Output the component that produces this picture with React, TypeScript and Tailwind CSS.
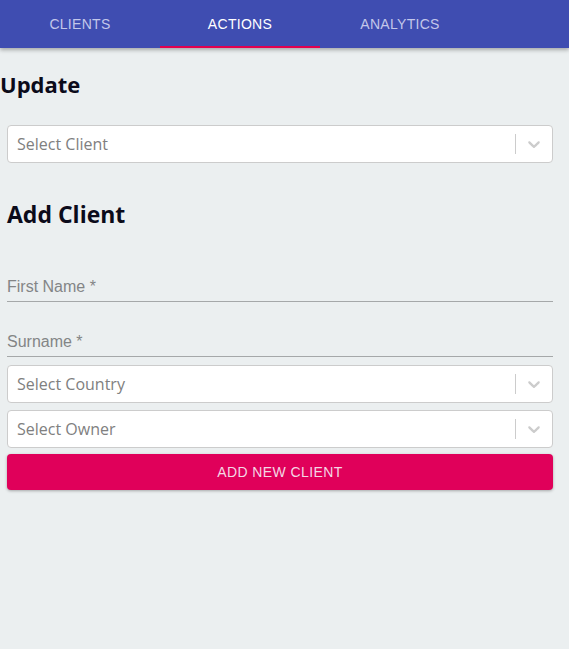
const tabs = ["Clients", "Actions", "Analytics"];

function Chevron() {
  return (
    <svg viewBox="0 0 20 20" width="20" height="20" fill="#cccccc">
      <path d="M4.516 7.548c0.436-0.446 1.043-0.481 1.576 0l3.908 3.747 3.908-3.747c0.533-0.481 1.141-0.446 1.574 0 0.436 0.445 0.408 1.197 0 1.615-0.406 0.418-4.695 4.502-4.695 4.502-0.217 0.223-0.502 0.335-0.787 0.335s-0.57-0.112-0.789-0.335c0 0-4.287-4.084-4.695-4.502s-0.436-1.17 0-1.615z" />
    </svg>
  );
}

function Select({ placeholder }: { placeholder: string }) {
  return (
    <div className="flex h-[38px] items-center rounded-[4px] border border-[#cccccc] bg-white">
      <div className="flex-1 px-[9px] font-['Open_Sans',sans-serif] text-[16px] text-[#808080]">
        {placeholder}
      </div>
      <span className="h-[20px] w-px bg-[#cccccc]" />
      <div className="p-[8px]">
        <Chevron />
      </div>
    </div>
  );
}

function TextField({ label }: { label: string }) {
  return (
    <div className="flex h-[55px] flex-col justify-end">
      <div className="border-b border-[#a5a8a9] pb-[5px] font-['Liberation_Sans',Arial,sans-serif] text-[16px] leading-[19px] text-[#838586]">
        {label} *
      </div>
    </div>
  );
}

export default function App() {
  return (
    <div className="min-h-[649px] bg-[#ebeff0] font-['Open_Sans',sans-serif]">
      <nav className="flex h-[48px] bg-[#3f4db1] shadow-[0_2px_4px_rgba(0,0,0,0.3)]">
        {tabs.map((t, i) => (
          <div
            key={t}
            className={
              i === 1
                ? "flex w-[160px] items-center justify-center border-b-2 border-[#e4004f] pt-[2px] font-['Liberation_Sans',Arial,sans-serif] text-[14px] tracking-[0.3px] uppercase text-white"
                : "flex w-[160px] items-center justify-center font-['Liberation_Sans',Arial,sans-serif] text-[14px] tracking-[0.3px] uppercase text-[#c3c7ea]"
            }
          >
            {t}
          </div>
        ))}
      </nav>

      <h3 className="mt-[21px] text-[22px] font-bold leading-[30px] text-[#0b0b1a]">
        Update
      </h3>

      <div className="pl-[7px] pr-[16px]">
        <div className="mt-[26px]">
          <Select placeholder="Select Client" />
        </div>

        <h2 className="mt-[35px] text-[23px] font-bold leading-[32px] text-[#0b0b1a]">
          Add Client
        </h2>

        <div className="mt-[17px]">
          <TextField label="First Name" />
          <TextField label="Surname" />
        </div>

        <div className="mt-[8px] flex flex-col gap-[7px]">
          <Select placeholder="Select Country" />
          <Select placeholder="Select Owner" />
          <button className="-mt-[1px] h-[36px] rounded-[4px] bg-[#e0005a] font-['Liberation_Sans',Arial,sans-serif] text-[14px] tracking-[0.4px] uppercase text-[#f4d7e4] shadow-[0_1px_3px_rgba(0,0,0,0.3)]">
            Add New Client
          </button>
        </div>
      </div>
    </div>
  );
}
